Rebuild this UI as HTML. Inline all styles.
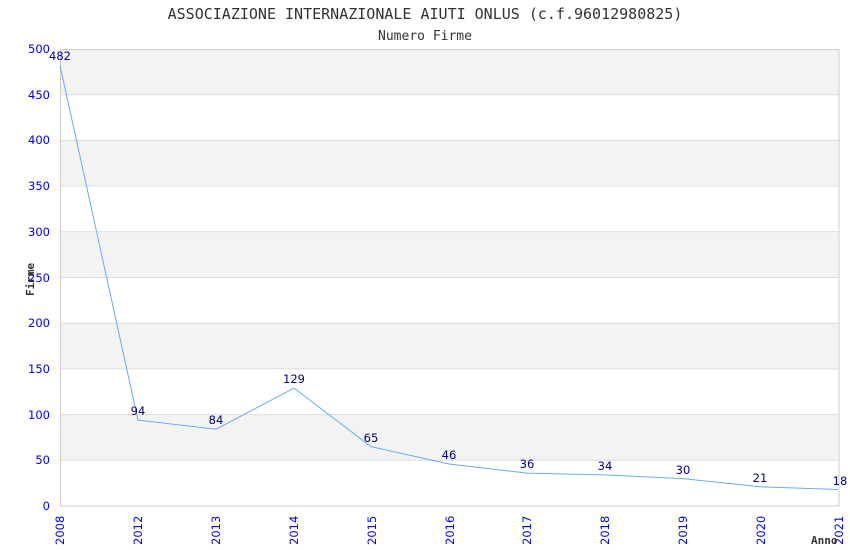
<!DOCTYPE html>
<html><head><meta charset="utf-8"><style>body{margin:0;background:#fff}svg{display:block}</style></head><body>
<svg width="850" height="550" xmlns="http://www.w3.org/2000/svg" font-family="DejaVu Sans, sans-serif">
<rect width="850" height="550" fill="#fff"/>
<g fill="#f3f3f3">
<rect x="60" y="49" width="779" height="45.7"/>
<rect x="60" y="140.4" width="779" height="45.7"/>
<rect x="60" y="231.8" width="779" height="45.7"/>
<rect x="60" y="323.2" width="779" height="45.7"/>
<rect x="60" y="414.6" width="779" height="45.7"/>
</g>
<g stroke="#ddd" stroke-width="1">
<line x1="60" y1="94.7" x2="839" y2="94.7"/><line x1="60" y1="140.4" x2="839" y2="140.4"/>
<line x1="60" y1="186.1" x2="839" y2="186.1"/><line x1="60" y1="231.8" x2="839" y2="231.8"/>
<line x1="60" y1="277.5" x2="839" y2="277.5"/><line x1="60" y1="323.2" x2="839" y2="323.2"/>
<line x1="60" y1="368.9" x2="839" y2="368.9"/><line x1="60" y1="414.6" x2="839" y2="414.6"/>
<line x1="60" y1="460.3" x2="839" y2="460.3"/>
</g>
<rect x="60.5" y="49.5" width="778.5" height="456.5" fill="none" stroke="#ccc"/>
<text x="425" y="19" text-anchor="middle" font-family="DejaVu Sans Mono, monospace" font-size="15" fill="#333">ASSOCIAZIONE INTERNAZIONALE AIUTI ONLUS (c.f.96012980825)</text>
<text x="425" y="40" text-anchor="middle" font-family="DejaVu Sans Mono, monospace" font-size="13" fill="#333">Numero Firme</text>
<g font-size="11.5" fill="#00f" text-anchor="end">
<text x="50" y="53">500</text><text x="50" y="99">450</text><text x="50" y="144">400</text>
<text x="50" y="190">350</text><text x="50" y="236">300</text><text x="50" y="282">250</text>
<text x="50" y="327">200</text><text x="50" y="373">150</text><text x="50" y="419">100</text>
<text x="50" y="464">50</text><text x="50" y="510">0</text>
</g>
<g font-size="11.5" fill="#00f" text-anchor="end">
<text transform="translate(64,545) rotate(-90)" text-anchor="start">2008</text>
<text transform="translate(142,545) rotate(-90)" text-anchor="start">2012</text>
<text transform="translate(220,545) rotate(-90)" text-anchor="start">2013</text>
<text transform="translate(298,545) rotate(-90)" text-anchor="start">2014</text>
<text transform="translate(376,545) rotate(-90)" text-anchor="start">2015</text>
<text transform="translate(454,545) rotate(-90)" text-anchor="start">2016</text>
<text transform="translate(531,545) rotate(-90)" text-anchor="start">2017</text>
<text transform="translate(609,545) rotate(-90)" text-anchor="start">2018</text>
<text transform="translate(687,545) rotate(-90)" text-anchor="start">2019</text>
<text transform="translate(765,545) rotate(-90)" text-anchor="start">2020</text>
<text transform="translate(843,545) rotate(-90)" text-anchor="start">2021</text>
</g>
<text transform="translate(34,296) rotate(-90)" font-family="DejaVu Sans Mono, monospace" font-size="11" font-weight="bold" fill="#333">Firme</text>
<text x="811" y="544" font-family="DejaVu Sans Mono, monospace" font-size="11" font-weight="bold" fill="#333">Anno</text>
<polyline fill="none" stroke="#6aaaf8" stroke-width="1" points="60,65.5 138,420.1 216,429.2 294,388.1 371,446.6 449,464 527,473.1 605,474.9 683,478.6 760,486.8 838,489.5"/>
<g font-size="11.5" fill="#000080" text-anchor="middle">
<text x="60" y="60">482</text><text x="138" y="415">94</text><text x="216" y="424">84</text>
<text x="294" y="383">129</text><text x="371" y="442">65</text><text x="449" y="459">46</text>
<text x="527" y="468">36</text><text x="605" y="470">34</text><text x="683" y="474">30</text>
<text x="760" y="482">21</text><text x="840" y="485">18</text>
</g>
</svg>
</body></html>
